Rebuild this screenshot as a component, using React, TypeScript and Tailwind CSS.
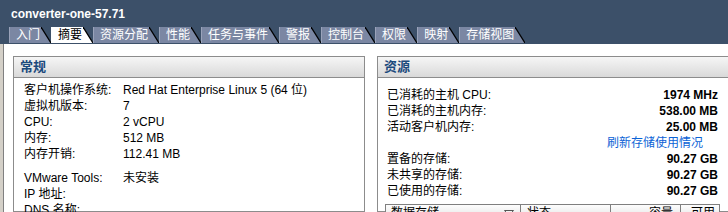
const tabs = ['入门', '摘要', '资源分配', '性能', '任务与事件', '警报', '控制台', '权限', '映射', '存储视图'];

const general: [string, string][] = [
  ['客户机操作系统:', 'Red Hat Enterprise Linux 5 (64 位)'],
  ['虚拟机版本:', '7'],
  ['CPU:', '2 vCPU'],
  ['内存:', '512 MB'],
  ['内存开销:', '112.41 MB'],
];

const general2: [string, string][] = [
  ['VMware Tools:', '未安装'],
  ['IP 地址:', ''],
  ['DNS 名称:', ''],
];

function Tab({ label, active }: { label: string; active?: boolean }) {
  const fill = active ? '#ffffff' : '#7b87a3';
  return (
    <div className="flex h-4">
      <div
        className={
          active
            ? 'flex items-center bg-white pl-[7px] pr-[1px] text-black'
            : 'flex items-center border-l border-[#9aa3ba] bg-[#7b87a3] pl-[6px] pr-[1px] text-white'
        }
      >
        {label}
      </div>
      <svg width="10" height="16" viewBox="0 0 10 16" className="block">
        <polygon points="0,0 10,16 0,16" fill={fill} />
        <line x1="0" y1="0" x2="10" y2="16" stroke="#000" strokeWidth="1.2" />
      </svg>
    </div>
  );
}

function PanelHeader({ title }: { title: string }) {
  return (
    <div className="flex h-[21px] items-center border-b border-[#8c8c8c] bg-gradient-to-b from-[#f6f6f6] to-[#d9d9d9] px-[6px] text-[13px] font-bold text-[#1b4a7d]">
      {title}
    </div>
  );
}

export default function App() {
  return (
    <div className="h-[212px] w-[728px] overflow-hidden bg-white text-[12px] text-black font-['Liberation_Sans','Noto_Sans_CJK_SC',sans-serif]">
      {/* title + tabs */}
      <div className="flex h-[44px] flex-col bg-[#3c5069]">
        <div className="flex h-[27px] items-center pl-[11px] text-[12px] font-bold text-white">converter-one-57.71</div>
        <div className="flex h-4 pl-[9px] leading-4">
          {tabs.map((t) => (
            <Tab key={t} label={t} active={t === '摘要'} />
          ))}
        </div>
      </div>

      <div className="flex h-[168px]">
        <div className="w-[3px] bg-[#d4d0c8]" />
        <div className="w-px bg-[#808080]" />
        <div className="flex flex-1 gap-[12px] overflow-hidden pl-[9px] pt-[12px]">
          {/* 常规 */}
          <div className="w-[352px] shrink-0 border border-[#8c8c8c]">
            <PanelHeader title="常规" />
            <div className="pl-[10px] pt-[4px] leading-4">
              {general.map(([k, v]) => (
                <div key={k} className="flex h-4">
                  <div className="w-[99px] shrink-0">{k}</div>
                  <div>{v}</div>
                </div>
              ))}
              <div className="h-2" />
              {general2.map(([k, v]) => (
                <div key={k} className="flex h-4">
                  <div className="w-[99px] shrink-0">{k}</div>
                  <div>{v}</div>
                </div>
              ))}
            </div>
          </div>

          {/* 资源 */}
          <div className="w-[380px] shrink-0 border border-r-0 border-[#8c8c8c]">
            <PanelHeader title="资源" />
            <div className="w-[340px] pl-[9px] pt-[9px] leading-4">
              <div className="flex h-4 justify-between">
                <span>已消耗的主机 CPU:</span>
                <span className="font-bold">1974 MHz</span>
              </div>
              <div className="flex h-4 justify-between">
                <span>已消耗的主机内存:</span>
                <span className="font-bold">538.00 MB</span>
              </div>
              <div className="flex h-4 justify-between">
                <span>活动客户机内存:</span>
                <span className="font-bold">25.00 MB</span>
              </div>
              <div className="flex h-4 justify-end pr-[15px] text-[#0b63d6]">刷新存储使用情况</div>
              <div className="flex h-4 justify-between">
                <span>置备的存储:</span>
                <span className="font-bold">90.27 GB</span>
              </div>
              <div className="flex h-4 justify-between">
                <span>未共享的存储:</span>
                <span className="font-bold">90.27 GB</span>
              </div>
              <div className="flex h-4 justify-between">
                <span>已使用的存储:</span>
                <span className="font-bold">90.27 GB</span>
              </div>
              <div className="ml-[-2px] mt-[5px] flex h-[18px] w-[335px] whitespace-nowrap border border-[#7f7f7f] bg-gradient-to-b from-[#fdfdfd] to-[#e0e0e0]">
                <div className="flex w-[135px] shrink-0 items-center justify-between border-r border-[#7f7f7f] pl-[5px] pr-[6px]">
                  <span>数据存储</span>
                  <svg width="10" height="6" viewBox="0 0 10 6">
                    <polygon points="0.5,0.5 9.5,0.5 5,5.5" fill="none" stroke="#555" strokeWidth="1" />
                  </svg>
                </div>
                <div className="flex w-[90px] shrink-0 items-center border-r border-[#7f7f7f] pl-[6px]">状态</div>
                <div className="flex w-[70px] shrink-0 items-center justify-end border-r border-[#7f7f7f] pr-[7px]">容量</div>
                <div className="flex min-w-0 flex-1 items-center pl-[10px]">可用</div>
              </div>
            </div>
          </div>
        </div>
      </div>
    </div>
  );
}
